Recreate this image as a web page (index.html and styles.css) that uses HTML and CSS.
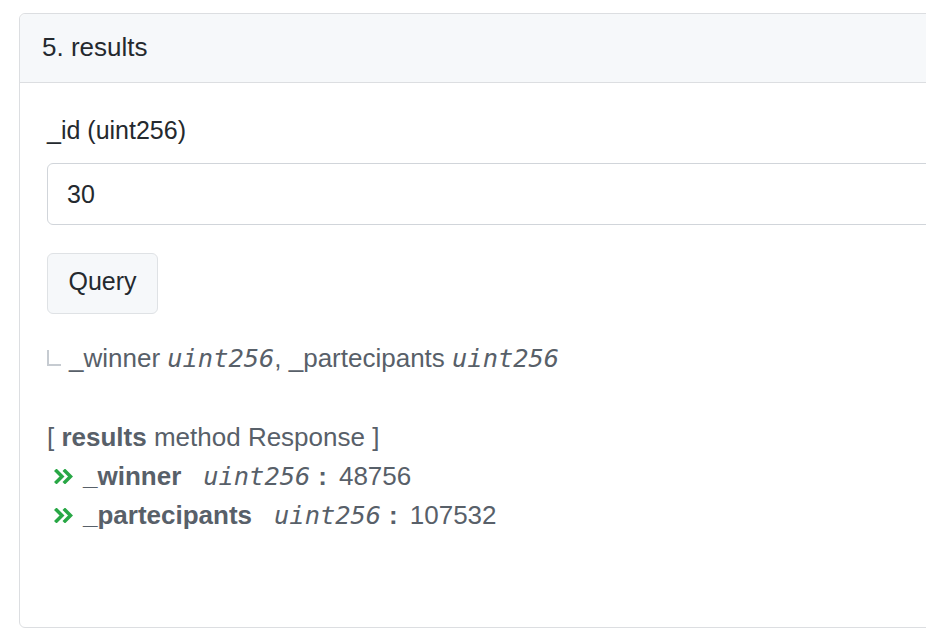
FILE: index.html
```html
<!DOCTYPE html>
<html>
<head>
<meta charset="utf-8">
<link rel="stylesheet" href="styles.css">
</head>
<body>
<div class="card">
  <div class="card-header">5. results</div>
  <div class="card-body">
    <label class="field-label">_id (uint256)</label>
    <input class="field-input" type="text" value="30">
    <button class="btn">Query</button>
    <div class="returns">
      <span class="corner"></span>
      <span>_winner <span class="type">uint256</span>, _partecipants <span class="type">uint256</span></span>
    </div>
    <div class="response">
      <div class="resp-title">[ <b>results</b> method Response ]</div>
      <div class="resp-row">
        <svg class="chev" width="20" height="15" viewBox="0 0 20 15"><path d="M2.5 2 L8 7.5 L2.5 13 M11 2 L16.5 7.5 L11 13" fill="none" stroke="#28a745" stroke-width="3.5" stroke-linecap="square" stroke-linejoin="miter"/></svg>
        <b class="name">_winner</b><span class="type">uint256</span><b class="colon">:</b><span class="val">48756</span>
      </div>
      <div class="resp-row">
        <svg class="chev" width="20" height="15" viewBox="0 0 20 15"><path d="M2.5 2 L8 7.5 L2.5 13 M11 2 L16.5 7.5 L11 13" fill="none" stroke="#28a745" stroke-width="3.5" stroke-linecap="square" stroke-linejoin="miter"/></svg>
        <b class="name">_partecipants</b><span class="type">uint256</span><b class="colon">:</b><span class="val">107532</span>
      </div>
    </div>
  </div>
</div>
</body>
</html>
```
FILE: styles.css
```css
html, body {
  margin: 0;
  padding: 0;
  background: #fff;
}
body {
  padding: 13px 0 0 19px;
  font-family: "Liberation Sans", Arial, sans-serif;
  color: #24292e;
  overflow: hidden;
}
.card {
  width: 960px;
  height: 613px;
  border: 1px solid #dcdee1;
  border-radius: 6px;
  box-sizing: content-box;
}
.card-header {
  height: 68px;
  line-height: 66px;
  padding-left: 22px;
  font-size: 26px;
  background: #f6f8fa;
  border-bottom: 1px solid #dcdee1;
  border-radius: 6px 0 0 0;
}
.card-body {
  padding: 32px 0 0 27px;
}
.field-label {
  display: block;
  font-size: 25px;
  line-height: 30px;
  height: 30px;
}
.field-input {
  display: block;
  margin-top: 18px;
  width: 920px;
  height: 62px;
  box-sizing: border-box;
  border: 1px solid #d1d5da;
  border-radius: 6px;
  padding: 0 19px;
  font-family: "Liberation Sans", Arial, sans-serif;
  font-size: 25px;
  color: #24292e;
  outline: none;
}
.btn {
  display: block;
  margin-top: 28px;
  width: 111px;
  height: 61px;
  box-sizing: border-box;
  border: 1px solid #dfe2e5;
  border-radius: 6px;
  background: #f6f8fa;
  font-family: "Liberation Sans", Arial, sans-serif;
  font-size: 25px;
  color: #24292e;
  padding: 0 0 5px 0;
}
.returns {
  margin-top: 29px;
  display: flex;
  align-items: center;
  font-size: 26px;
  line-height: 30px;
  color: #586069;
}
.corner {
  display: inline-block;
  width: 12px;
  height: 14px;
  border-left: 2px solid #c6cbd1;
  border-bottom: 2px solid #c6cbd1;
  margin: 0 8px 0 0;
}
.type {
  font-family: "DejaVu Sans Mono", monospace;
  font-style: italic;
  font-size: 25.4px;
  color: #586069;
}
.response {
  margin-top: 45px;
  color: #586069;
  font-size: 26px;
  line-height: 39px;
}
.resp-row {
  display: flex;
  align-items: center;
  padding-left: 7px;
  height: 39px;
}
.chev {
  margin-right: 9px;
}
.name {
  margin-right: 22px;
}
.colon {
  margin: 0 12px 0 8px;
}
```
